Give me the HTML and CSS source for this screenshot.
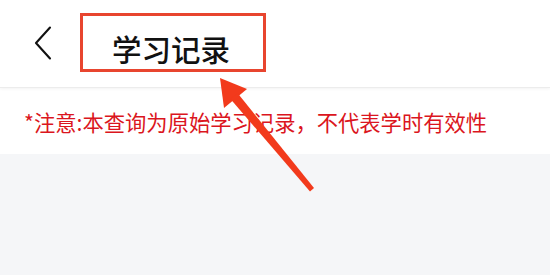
FILE: index.html
```html
<!DOCTYPE html>
<html lang="zh-CN">
<head>
<meta charset="utf-8">
<title>学习记录</title>
<link rel="stylesheet" href="styles.css">
</head>
<body>
<div class="page">
  <header class="header">
    <svg class="back" width="20" height="34" viewBox="0 0 20 34"><path d="M17 1.5 L3 17 L17 32.5" fill="none" stroke="#111" stroke-width="2.1" stroke-linecap="round" stroke-linejoin="round"/></svg>
    <div class="title-box"><span class="title">学习记录</span></div>
  </header>
  <div class="notice">*注意:本查询为原始学习记录，不代表学时有效性</div>
  <div class="content"></div>
  <svg class="arrow" width="550" height="275" viewBox="0 0 550 275">
    <polygon points="220,78 224,108 247,89" fill="#f23a1c"/>
    <polygon points="237.5,93 230.5,99 310,191.5 314,188" fill="#f23a1c"/>
  </svg>
</div>
</body>
</html>
```

FILE: styles.css
```css
html, body {
  margin: 0;
  padding: 0;
  background: #ffffff;
}
.page {
  position: relative;
  width: 550px;
  height: 275px;
  display: flex;
  flex-direction: column;
  overflow: hidden;
  font-family: "Noto Sans CJK SC", "Noto Sans", sans-serif;
}
.header {
  height: 88px;
  box-sizing: border-box;
  display: flex;
  align-items: flex-start;
  padding: 13px 0 0 33px;
  border-bottom: 1px solid #ececec;
  box-shadow: 0 1px 3px rgba(0, 0, 0, 0.05);
  background: #fff;
  position: relative;
  z-index: 1;
}
.back {
  margin-top: 13px;
  display: block;
}
.title-box {
  margin-left: 27px;
  width: 186px;
  height: 59px;
  box-sizing: border-box;
  border: 3px solid #e8452f;
  padding: 17px 0 0 29px;
}
.title {
  display: block;
  font-size: 29.5px;
  line-height: 30px;
  font-weight: 500;
  color: #111;
}
.notice {
  height: 66px;
  box-sizing: border-box;
  padding: 23px 0 0 24px;
  font-size: 21.3px;
  line-height: 21px;
  color: #db1520;
  background: #fff;
  white-space: nowrap;
}
.content {
  flex: 1;
  background: #f5f6f8;
}
.arrow {
  position: absolute;
  left: 0;
  top: 0;
  z-index: 2;
}
```
